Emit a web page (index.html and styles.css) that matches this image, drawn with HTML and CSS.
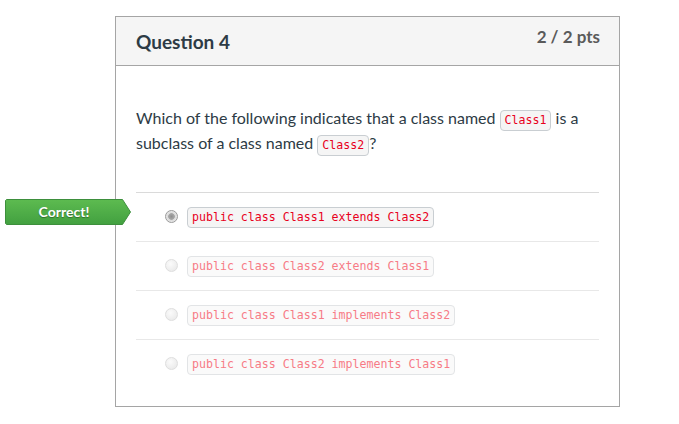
FILE: index.html
```html
<!DOCTYPE html>
<html>
<head>
<meta charset="utf-8">
<link rel="stylesheet" href="styles.css">
</head>
<body>
<div class="card">
  <div class="card-header">
    <h2 class="title">Question 4</h2>
    <div class="points">2 / 2 pts</div>
  </div>
  <div class="card-body">
    <p class="question">Which of the following indicates that a class named <code class="chip">Class1</code> is a subclass of a class named <code class="chip">Class2</code>?</p>
    <div class="answers">
      <div class="answer selected">
        <div class="badge">
          <svg class="badge-bg" width="126" height="26" viewBox="0 0 126 26">
            <defs>
              <linearGradient id="g" x1="0" y1="0" x2="0" y2="1">
                <stop offset="0" stop-color="#5dbb50"/>
                <stop offset="1" stop-color="#42a040"/>
              </linearGradient>
            </defs>
            <polygon points="1.5,0.5 117.5,0.5 125.5,13 117.5,25.5 1.5,25.5 0.5,24.5 0.5,1.5" fill="url(#g)" stroke="#3d8f3c" stroke-width="1"/>
          </svg>
          <span class="badge-text">Correct!</span>
        </div>
        <span class="radio on"></span>
        <code class="chip">public class Class1 extends Class2</code>
      </div>
      <div class="answer dim">
        <span class="radio"></span>
        <code class="chip">public class Class2 extends Class1</code>
      </div>
      <div class="answer dim">
        <span class="radio"></span>
        <code class="chip">public class Class1 implements Class2</code>
      </div>
      <div class="answer dim last">
        <span class="radio"></span>
        <code class="chip">public class Class2 implements Class1</code>
      </div>
    </div>
  </div>
</div>
</body>
</html>
```

FILE: styles.css
```css
html, body {
  margin: 0;
  padding: 0;
  background: #ffffff;
}
body {
  font-family: Lato, "Open Sans", sans-serif;
  color: #2d3b45;
}
.card {
  box-sizing: border-box;
  width: 505px;
  margin: 16px 0 0 115px;
  border: 1px solid #a5a5a5;
  height: 391px;
}
.card-header {
  display: flex;
  justify-content: space-between;
  align-items: flex-start;
  height: 49px;
  box-sizing: border-box;
  background: #f5f5f5;
  border-bottom: 1px solid #a5a5a5;
  padding: 8px 19px 0 20px;
}
.title {
  margin: 5px 0 0 0;
  font-size: 19px;
  line-height: 24px;
  font-weight: 700;
  color: #2d3b45;
}
.points {
  font-size: 17px;
  line-height: 24px;
  font-weight: 700;
  color: #5a5a5a;
}
.card-body {
  padding: 40px 20px 0 20px;
}
.question {
  margin: 0;
  font-size: 16px;
  line-height: 24px;
}
.chip {
  display: inline-block;
  font-family: "DejaVu Sans Mono", monospace;
  font-size: 11.6px;
  line-height: 19px;
  padding: 0 4px;
  border: 1px solid #c9ced2;
  border-radius: 4px;
  background: #f5f5f5;
  color: #e8001c;
}
.answers {
  margin-top: 36px;
  border-top: 1px solid #dadada;
}
.answer {
  position: relative;
  display: flex;
  align-items: center;
  height: 48px;
  padding-left: 29px;
  border-bottom: 1px solid #e8e8e8;
}
.answer.last {
  border-bottom: none;
}
.answer .chip {
  margin-left: 9px;
  margin-top: 1px;
}
.dim .chip {
  color: #f77b86;
  background: #fafafa;
  border-color: #e2e4e6;
}
.radio {
  box-sizing: border-box;
  width: 13px;
  height: 13px;
  border-radius: 50%;
  border: 1px solid #dedede;
  background: radial-gradient(circle at 40% 35%, #fbfbfb, #e6e6e6);
  margin-top: -2px;
}
.radio.on {
  border-color: #9a9a9a;
  background: radial-gradient(circle, #8f8f8f 0, #a8a8a8 3px, #d9d9d9 3.6px, #ececec 6px);
}
.badge {
  position: absolute;
  left: -131px;
  top: 6px;
  width: 126px;
  height: 26px;
}
.badge-bg {
  position: absolute;
  left: 0;
  top: 0;
  display: block;
}
.badge-text {
  position: relative;
  display: block;
  width: 118px;
  text-align: center;
  font-size: 14px;
  font-weight: 700;
  line-height: 25px;
  color: #ffffff;
  text-shadow: 0 1px 1px rgba(0, 0, 0, 0.35);
}
```
